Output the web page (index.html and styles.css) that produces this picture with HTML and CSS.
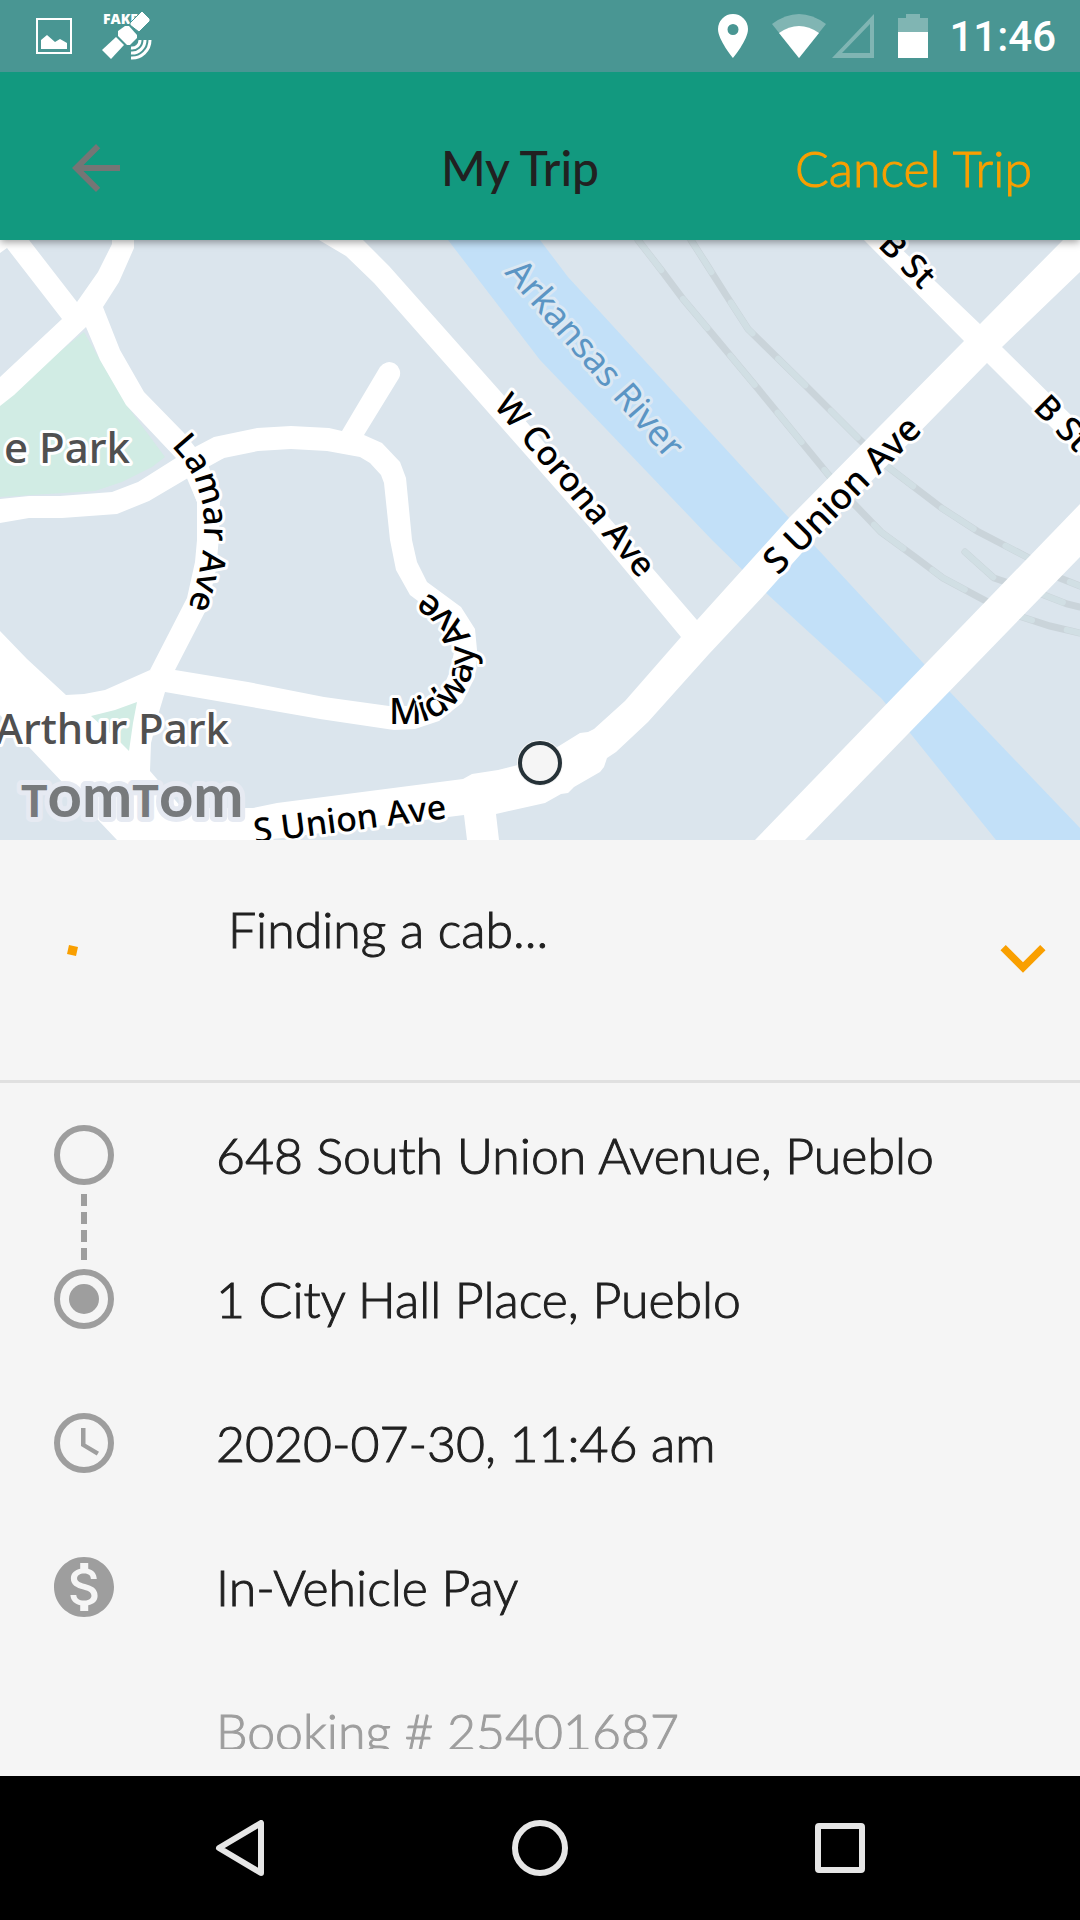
FILE: index.html
```html
<!DOCTYPE html>
<html lang="en">
<head>
    <meta charset="UTF-8">
    <meta name="viewport" content="width=device-width, initial-scale=1.0">
    <title>My Trip</title>
    <link rel="stylesheet" href="styles.css">
</head>
<body>
    <div class="app">
        <div class="status-bar">
            <div class="status-left">
                <svg width="36" height="36" viewBox="0 0 36 36">
                    <rect x="1" y="1" width="34" height="34" fill="none" stroke="#fff" stroke-width="2"/>
                    <path d="M5 31V22L11 17L19 24L24 21L31 25V31Z" fill="#fff"/>
                </svg>
                <svg width="50" height="50" viewBox="0 0 50 50" fill="#fff">
                    <text class="fake-label" x="1" y="13">FAKE</text>
                    <path class="panel-edge" d="M40 0L48 8V10L37 21L28 14V12Z"/>
                    <path d="M23 15L27 15L35 24V27L28 34H25L16 25V20Z"/>
                    <path d="M14 26L22 34L9 48L0 39Z"/>
                    <path d="M38 29A8 8 0 0 1 29 37M43 29A13 13 0 0 1 29 42M48 29A18 18 0 0 1 29 47" fill="none" stroke="#fff" stroke-width="3"/>
                </svg>
            </div>
            <div class="status-right">
                <svg class="pin" width="30" height="44" viewBox="0 0 30 44">
                    <path d="M15 0A15 15 0 0 0 0 15C0 26 15 44 15 44S30 26 30 15A15 15 0 0 0 15 0ZM15 21A5.500 5.500 0 1 1 15 10A5.500 5.500 0 0 1 15 21Z" fill="#fff"/>
                </svg>
                <svg class="wifi" width="54" height="44" viewBox="0 0 54 44" fill="#fff">
                    <path d="M0 10Q27 -10 54 10L27 44Z" opacity=".3"/>
                    <path d="M7 19Q27 5 47 19L27 44Z"/>
                </svg>
                <svg class="signal" width="42" height="44" viewBox="0 0 42 44">
                    <path d="M42 0V44H0ZM38 10L10 39H38Z" fill="#fff" fill-rule="evenodd" opacity=".3"/>
                </svg>
                <svg class="battery" width="30" height="44" viewBox="0 0 30 44" fill="#fff">
                    <path d="M0 4H8V0H22V4H30V18H0Z" opacity=".3"/>
                    <path d="M0 18H30V44H0Z"/>
                </svg>
                <span class="clock">11:46</span>
            </div>
        </div>

        <header class="header">
            <button class="icon-button back" aria-label="Back">
                <svg width="72" height="72" viewBox="0 0 24 24" fill="#757575">
                    <path d="M20 11H7.830l5.590-5.590L12 4l-8 8 8 8 1.410-1.410L7.830 13H20v-2z"/>
                </svg>
            </button>
            <h1 class="title">My Trip</h1>
            <button class="cancel">Cancel Trip</button>
        </header>

        <svg class="map" viewBox="0 240 1080 600">
            <defs>
                <path id="lamar" d="M171 446Q203 478 204 526Q204 570 184 618"/>
                <path id="midway" d="M389 724L406 724A68 68 0 0 0 474 656C474 628 452 609 408 578"/>
                <path id="corona" d="M493 406L646 587"/>
                <path id="river" d="M504 273L680 475"/>
                <path id="union" d="M778 576L940 414"/>
                <path id="union-low" d="M255 843L465 816"/>
                <path id="bst" d="M877 246L940 309"/>
                <path id="bst-right" d="M1032 409L1110 487"/>
            </defs>

            <rect y="240" width="1080" height="600" fill="#dbe5ed"/>

            <!-- water and parks -->
            <path fill="#c2e0f8" d="M448 240L540 360L585 407L712 540L766 593L881 698L910 733L996 840H1080V828L950 692L812 543L568 277L540 240Z"/>
            <path fill="#d1ece4" d="M84 332L100 360L128 407L165 457L152 467L122 482L95 491L0 497V400Z"/>

            <!-- railway -->
            <g class="rail">
                <path d="M638 240L662 271L683 299L709 330L759 390L831 478L855 505L881 532L915 557L943 578L988 602L1022 617L1050 626L1080 633"/>
                <path d="M691 240L707 265L726 295L748 329L805 385L860 440L888 467L943 509L977 531L1027 557L1060 578L1080 586"/>
                <path d="M965 552L994 578L1044 595L1067 604L1080 607"/>
            </g>
            <g class="rail-dash">
                <path d="M638 240L662 271L683 299L709 330L759 390L831 478L855 505L881 532L915 557L943 578L988 602L1022 617L1050 626L1080 633"/>
                <path d="M691 240L707 265L726 295L748 329L805 385L860 440L888 467L943 509L977 531L1027 557L1060 578L1080 586"/>
                <path d="M965 552L994 578L1044 595L1067 604L1080 607"/>
            </g>

            <!-- roads -->
            <g fill="#fff">
                <path d="M0 240H29L77 302L98 272L112 244V240H134V248L119 282L103 307L120 350L144 392L184 433L195 447L214 437L257 428L291 426L329 428L342 431L380 367A11 11 0 0 1 399 378L364 435L382 443L400 462L406 478L412 540L417 562L427 582L461 607L475 629L477 650L475 677L462 703L439 721L415 729L394 730L320 719L165 692L150 670L187 598L195 562L197 540V502L188 478L149 501L117 514L62 518H29L0 523V499L29 496H60L112 492L138 482L176 458L126 405L100 360L86 327L14 395L0 406V377L62 319L7 248L0 253Z"/>
                <path d="M0 631L27 659L66 695L84 694L105 690L150 670L175 680L165 692L159 712L151 743L150 771L182 808H253L277 803L463 779L472 774L498 770L530 762L559 746L580 733L588 732L594 729L625 701L681 637L592 530L540 471L374 283L346 256L319 240H363L389 266L499 390L697 620L789 518L964 341L864 240H892L980 324L1063 240H1080V272L1002 347L1080 424V456L987 363L809 545L766 593L709 654L648 722L616 752L607 758L604 767L600 772L574 787L568 793L561 794L545 803L496 814L499 840H467L464 815L282 838L262 840H117L29 747L0 715Z"/>
                <path d="M1080 504V557L805 840H755Z"/>
            </g>
            <!-- blocks enclosed by the loops -->
            <path fill="#dbe5ed" d="M188 478L224 458L258 451L291 449L327 451L360 457L370 463L381 475L384 483L390 540L396 570L410 595L434 613L450 632L454 652L450 672L440 693L428 701L410 706H389L324 697L248 682L175 670L207 608L216 570L219 537L220 500L208 470L200 472Z"/>
            <path fill="#fff" d="M176 458L195 447L224 458L208 464L220 500L197 502L186 476Z"/>
            <path fill="#d1ece4" d="M91 716L115 710L137 702L133 723L129 751L121 743Z"/>

            <g class="street">
                <text><textPath href="#lamar">Lamar Ave</textPath></text>
                <text class="large"><textPath href="#midway">Midway Ave</textPath></text>
                <text><textPath href="#corona">W Corona Ave</textPath></text>
                <text class="large"><textPath href="#union">S Union Ave</textPath></text>
                <text><textPath href="#union-low">S Union Ave</textPath></text>
                <text><textPath href="#bst">B St</textPath></text>
                <text><textPath href="#bst-right">B St</textPath></text>
            </g>
            <text class="street river large"><textPath href="#river">Arkansas River</textPath></text>
            <text class="park" x="4" y="463">e Park</text>
            <text class="park" x="229" y="744" text-anchor="end">Arthur Park</text>

            <text class="brand" x="21" y="817"><tspan class="brand-cap">T</tspan>om<tspan class="brand-cap">T</tspan>om</text>

            <circle cx="540" cy="763" r="23" fill="#f5f5f5"/>
            <circle cx="540" cy="763" r="20" fill="#f5f5f5" stroke="#263238" stroke-width="4"/>
        </svg>

        <main class="sheet">
            <section class="progress">
                <svg class="spinner" width="72" height="72" viewBox="0 0 72 72">
                    <path d="M21 21L30 23L28 32L19 30Z" fill="#f99f00"/>
                </svg>
                <p class="progress-text">Finding a cab...</p>
                <button class="icon-button" aria-label="Hide trip details">
                    <svg width="90" height="90" viewBox="0 0 24 24" fill="#f99f00">
                        <path d="M16.590 8L12 12.580 7.410 8 6 9.410l6 6 6-6z"/>
                    </svg>
                </button>
            </section>

            <ul class="details">
                <li class="row pickup">
                    <svg class="row-icon" viewBox="0 0 24 24"><circle cx="12" cy="12" r="9" fill="none" stroke="#9e9e9e" stroke-width="2"/></svg>
                    648 South Union Avenue, Pueblo
                </li>
                <li class="row">
                    <svg class="row-icon" viewBox="0 0 24 24"><circle cx="12" cy="12" r="9" fill="none" stroke="#9e9e9e" stroke-width="2"/><circle cx="12" cy="12" r="5" fill="#9e9e9e"/></svg>
                    1 City Hall Place, Pueblo
                </li>
                <li class="row">
                    <svg class="row-icon" viewBox="0 0 24 24"><circle cx="12" cy="12" r="9" fill="none" stroke="#9e9e9e" stroke-width="2"/><path d="M12.500 7H11v6l5.250 3.150.75-1.230-4.500-2.670z" fill="#9e9e9e"/></svg>
                    2020-07-30, 11:46 am
                </li>
                <li class="row">
                    <svg class="row-icon" viewBox="0 0 24 24"><path d="M12 2C6.480 2 2 6.480 2 12s4.480 10 10 10 10-4.480 10-10S17.520 2 12 2zm1.410 16.090V20h-2.670v-1.930c-1.710-.36-3.160-1.460-3.270-3.400h1.960c.1 1.050.82 1.870 2.650 1.870 1.960 0 2.400-.98 2.400-1.590 0-.83-.44-1.610-2.670-2.140-2.480-.6-4.180-1.620-4.180-3.670 0-1.720 1.390-2.840 3.110-3.210V4h2.670v1.950c1.860.45 2.790 1.860 2.850 3.390H14.300c-.05-1.110-.64-1.870-2.220-1.870-1.500 0-2.400.68-2.400 1.640 0 .84.65 1.390 2.670 1.910s4.180 1.390 4.180 3.910c-.01 1.830-1.380 2.830-3.120 3.160z" fill="#9e9e9e"/></svg>
                    In-Vehicle Pay
                </li>
                <li class="row booking">Booking # 25401687</li>
            </ul>
        </main>

        <nav class="nav-bar">
            <button class="nav-button" aria-label="Back">
                <svg width="56" height="56" viewBox="0 0 56 56"><path d="M49 3V53L7 28Z"/></svg>
            </button>
            <button class="nav-button" aria-label="Home">
                <svg width="56" height="56" viewBox="0 0 56 56"><circle cx="28" cy="28" r="25"/></svg>
            </button>
            <button class="nav-button" aria-label="Recent apps">
                <svg width="56" height="56" viewBox="0 0 56 56"><rect x="6" y="6" width="44" height="44" rx="1"/></svg>
            </button>
        </nav>
    </div>
</body>
</html>
```
FILE: styles.css
```css
* {
    box-sizing: border-box;
}
body {
    margin: 0;
    font-family: Lato, sans-serif;
    font-size: 50px;
    font-weight: 300;
    line-height: 62px;
    color: #212121;
    background: #f5f5f5;
}
button {
    padding: 0;
    border: none;
    background: none;
    font: inherit;
    cursor: pointer;
}
svg {
    display: block;
}
.app {
    display: flex;
    flex-direction: column;
    height: 100vh;
}

/* system status bar */
.status-bar {
    display: flex;
    position: relative;
    flex: none;
    justify-content: space-between;
    align-items: center;
    height: 72px;
    padding: 0 24px 0 36px;
    background: #499693;
    z-index: 2;
}
.status-left,
.status-right {
    display: flex;
    align-items: center;
}
.status-left {
    gap: 30px;
}
.fake-label {
    font: 900 14px "Open Sans", sans-serif;
}
.panel-edge {
    stroke: #499693;
    stroke-width: 1px;
}
.wifi {
    margin-left: 24px;
}
.signal {
    margin-left: 6px;
}
.battery {
    margin: 0 21px 0 24px;
}
.clock {
    padding-top: 2px;
    font-family: Roboto, sans-serif;
    font-size: 42px;
    font-weight: 500;
    color: #fff;
}

/* header */
.header {
    display: grid;
    flex: none;
    grid-template-columns: 1fr auto 1fr;
    align-items: center;
    height: 168px;
    padding: 24px 48px 0 8px;
    background: #12997f;
    box-shadow: 0 2px 8px rgba(0, 0, 0, 0.4);
    z-index: 1;
}
.icon-button {
    flex: none;
}
.back {
    justify-self: start;
    margin-left: 52px;
}
.title {
    margin: 0;
    font-size: 48px;
    font-weight: 500;
}
.cancel {
    justify-self: end;
    color: #f99f00;
}
/* the light weight is too faint on its own */
.cancel,
.sheet {
    -webkit-text-stroke: 1px;
}

/* map */
.map {
    flex: none;
    width: 100%;
}
.rail path,
.rail-dash path {
    fill: none;
    stroke: #cad4da;
    stroke-width: 7px;
    stroke-linecap: round;
}
.rail-dash path {
    stroke: #d1dfe4;
    stroke-width: 6px;
    stroke-dasharray: 38 36;
}
.street {
    font-family: "Noto Sans", sans-serif;
    font-size: 34px;
    font-weight: 500;
    fill: #000;
    stroke: #fff;
    stroke-width: 6px;
    stroke-linejoin: round;
    paint-order: stroke;
}
.large {
    font-size: 36px;
}
.river {
    font-weight: 400;
    fill: #5b95c4;
    stroke: #dbe8f3;
}
.park {
    font-family: "Noto Sans", sans-serif;
    font-size: 42px;
    font-weight: 500;
    fill: #505050;
    stroke: #fff;
    stroke-width: 6px;
    stroke-linejoin: round;
    paint-order: stroke;
}
.brand {
    font-size: 60px;
    font-weight: 700;
    fill: #777a7c;
    stroke: #e6eaf2;
    stroke-width: 10px;
    stroke-linejoin: round;
    paint-order: stroke;
}
.brand-cap {
    font-size: 44px;
    font-weight: 900;
}

/* trip sheet */
.sheet {
    display: flex;
    flex: 1;
    flex-direction: column;
    min-height: 0;
    padding-bottom: 27px;
}
.progress {
    display: flex;
    flex: none;
    align-items: center;
    height: 243px;
    padding: 0 12px 0 48px;
    border-bottom: 3px solid #e0e0e0;
}
.progress-text {
    flex: 1;
    min-height: 124px;
    margin: 0 0 0 108px;
}
.details {
    flex: 1;
    min-height: 0;
    margin: 0;
    padding: 0;
    list-style: none;
    overflow: hidden;
}
.row {
    display: flex;
    position: relative;
    align-items: center;
    gap: 96px;
    height: 144px;
    padding-left: 48px;
}
.row-icon {
    flex: none;
    width: 72px;
    height: 72px;
}
/* dashed line down to the destination */
.pickup::after {
    content: "";
    position: absolute;
    top: 111px;
    left: 81px;
    width: 6px;
    height: 66px;
    background: repeating-linear-gradient(#9e9e9e 0 12px, transparent 12px 18px);
}
.booking {
    padding-left: 216px;
    color: #9e9e9e;
}

/* system navigation */
.nav-bar {
    display: flex;
    flex: none;
    justify-content: center;
    align-items: center;
    gap: 204px;
    height: 144px;
    background: #000;
}
.nav-button {
    display: flex;
    justify-content: center;
    width: 96px;
}
.nav-button svg {
    fill: none;
    stroke: #e6e6e6;
    stroke-width: 6px;
    stroke-linejoin: round;
}
```
